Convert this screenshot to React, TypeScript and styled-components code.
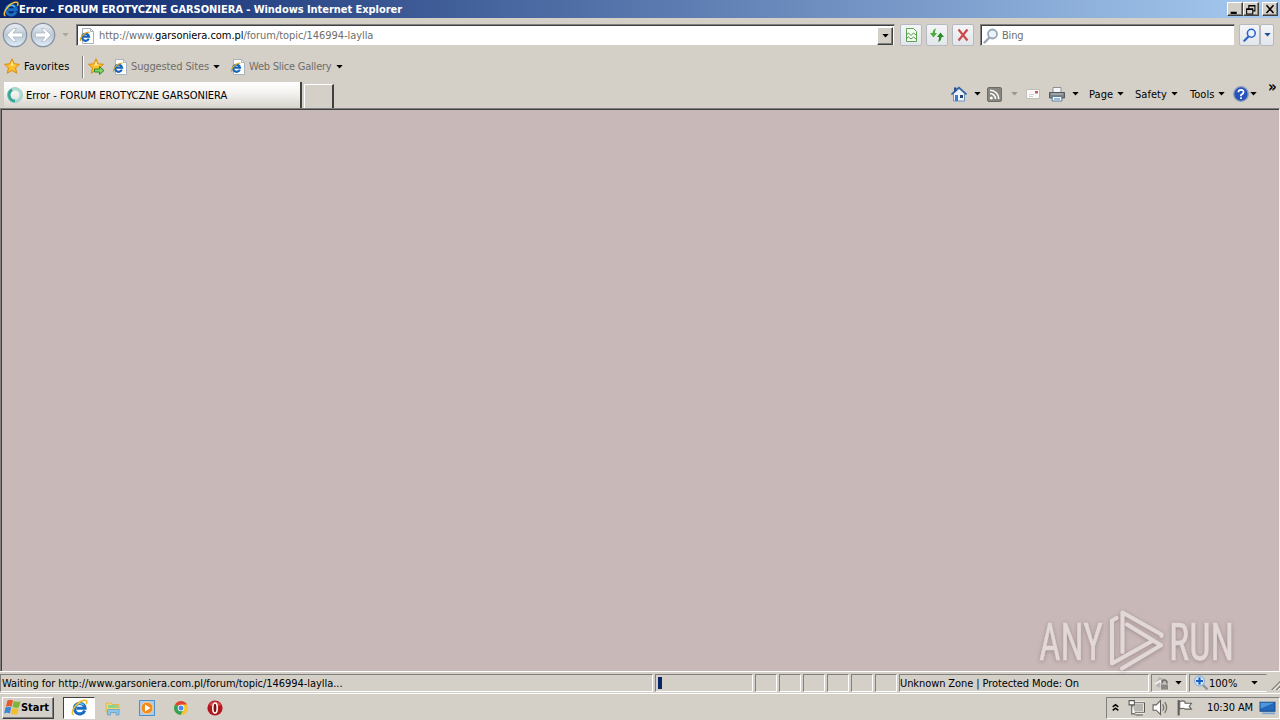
import type {ReactNode} from 'react';
import styled, {createGlobalStyle} from 'styled-components';

const GlobalStyle = createGlobalStyle`
  * {
    box-sizing: border-box;
  }
  body {
    margin: 0;
    overflow: hidden;
    background: #d4d0c8;
  }
  svg {
    flex: none;
  }
`;

const Window = styled.div`
  display: flex;
  flex-direction: column;
  width: 1280px;
  height: 720px;
  background: #d4d0c8;
  color: #000;
  font-family: 'DejaVu Sans Condensed', 'DejaVu Sans', sans-serif;
  font-stretch: condensed;
  font-size: 11px;
  line-height: 14px;
  white-space: nowrap;
`;

const Label = styled.span<{$width: number; $track?: number; $muted?: boolean; $bold?: boolean}>`
  flex: none;
  width: ${(props) => props.$width}px;
  padding-top: 1px;
  letter-spacing: ${(props) => props.$track || 0}px;
  color: ${(props) => (props.$muted ? '#706e69' : 'inherit')};
  font-weight: ${(props) => (props.$bold ? 700 : 400)};
  & > b {
    font-weight: 400;
    color: #000;
  }
`;

const Space = styled.span<{$size: number}>`
  flex: none;
  width: ${(props) => props.$size}px;
`;

const Spacer = styled.div`
  flex: 1;
`;

const TitleBar = styled.header`
  display: flex;
  align-items: center;
  height: 18px;
  padding: 0 2px 0 3px;
  color: #fff;
  background: linear-gradient(90deg, #0a246a, #a6caf0);
`;

const CaptionButton = styled.button`
  width: 16px;
  height: 14px;
  padding: 0;
  display: flex;
  border: 1px solid;
  border-color: #fff #404040 #404040 #fff;
  background: #d4d0c8;
  box-shadow: inset -1px -1px #808080;
`;

const NavRow = styled.div`
  display: flex;
  align-items: center;
  height: 34px;
  padding-left: 2px;
`;

const Field = styled.div<{$width: number}>`
  display: flex;
  align-items: center;
  width: ${(props) => props.$width}px;
  height: 22px;
  padding: 1px 0 0 2px;
  background: #fff;
  border: 1px solid;
  border-color: #808080 #d4d0c8 #d4d0c8 #808080;
  box-shadow: inset 1px 1px #404040;
`;

const FieldDrop = styled.button`
  width: 16px;
  height: 18px;
  margin-right: 1px;
  padding: 0;
  display: flex;
  align-items: center;
  justify-content: center;
  background: #d4d0c8;
  border: 1px solid;
  border-color: #fff #404040 #404040 #fff;
  box-shadow: inset -1px -1px #808080;
`;

const ToolButton = styled.button<{$width?: number}>`
  display: flex;
  align-items: center;
  justify-content: center;
  flex: none;
  width: ${(props) => props.$width || 22}px;
  height: 22px;
  padding: 0;
  border: 1px solid #b5bac2;
  border-radius: 2px;
  background: linear-gradient(#f4f5f6, #e2e6eb);
`;

const FavoritesRow = styled.div`
  display: flex;
  align-items: center;
  height: 29px;
  padding-left: 4px;
`;

const Divider = styled.div`
  width: 2px;
  height: 22px;
  border-left: 1px solid #808080;
  border-right: 1px solid #fff;
`;

const TabRow = styled.div`
  display: flex;
  align-items: flex-end;
  height: 27px;
  padding-left: 4px;
`;

const Tab = styled.div`
  display: flex;
  align-items: center;
  width: 298px;
  height: 26px;
  padding-left: 3px;
  background: linear-gradient(#fff, #f4f3f1 40%, #d8d4cd);
  border-right: 2px solid #404040;
`;

const NewTab = styled.div`
  width: 30px;
  height: 24px;
  margin-left: 2px;
  border-top: 1px solid #fff;
  border-left: 1px solid #fff;
  border-right: 2px solid #404040;
`;

const CommandBar = styled.div`
  display: flex;
  align-items: center;
  align-self: flex-start;
  width: 329px;
  height: 26px;
`;

const Overflow = styled.span`
  align-self: flex-start;
  margin: -1px 0 0 11px;
  font-size: 15px;
  font-weight: 700;
`;

const Page = styled.main`
  position: relative;
  height: 563px;
  border-top: 1px solid #808080;
  border-left: 1px solid #808080;
  border-right: 1px solid #f4efee;
  box-shadow: inset 1px 1px #404040;
  background: #c8b8b7;
`;

const Watermark = styled.svg`
  position: absolute;
  left: 1019px;
  top: 491px;
  overflow: visible;
  filter: drop-shadow(0 1px 2px rgba(90, 70, 70, 0.4));
`;

const StatusBar = styled.footer`
  display: flex;
  gap: 2px;
  height: 22px;
  border-top: 1px solid #fff;
  padding-top: 2px;
`;

const StatusCell = styled.div<{$width: number; $open?: boolean}>`
  display: flex;
  align-items: center;
  flex: none;
  width: ${(props) => props.$width}px;
  height: 18px;
  border: 1px solid;
  border-color: #808080 #fff #fff #808080;
  ${(props) => props.$open && 'border-right-color: transparent;'}
`;

const Progress = styled.div`
  width: 4px;
  height: 12px;
  margin-left: 2px;
  background: #0a246a;
`;

const TaskBar = styled.div`
  display: flex;
  align-items: center;
  height: 27px;
  padding: 1px 0 0 2px;
  border-top: 1px solid #fff;
`;

const StartButton = styled.button`
  display: flex;
  align-items: center;
  width: 52px;
  height: 22px;
  padding: 0 0 0 1px;
  font: inherit;
  text-align: left;
  background: #d4d0c8;
  border: 1px solid;
  border-color: #fff #404040 #404040 #fff;
  box-shadow: inset -1px -1px #808080;
`;

const TaskItem = styled.div<{$active?: boolean}>`
  display: flex;
  align-items: center;
  justify-content: center;
  width: ${(props) => (props.$active ? 32 : 34)}px;
  height: 22px;
  border: 1px solid;
  border-color: ${(props) => (props.$active ? '#404040 #fff #fff #404040' : 'transparent')};
  background: ${(props) => (props.$active ? '#fff' : 'transparent')};
`;

const Tray = styled.div`
  display: flex;
  align-items: center;
  width: 174px;
  height: 22px;
  padding-left: 4px;
  border: 1px solid;
  border-color: #808080 #fff #fff #808080;
`;

const Arrow = ({color = '#000'}: {color?: string}) => (
  <svg width="7" height="4" viewBox="0 0 7 4">
    <path d="M.300 0h6.400L3.500 3.600z" fill={color} />
  </svg>
);

const Glyph = ({children, size = 16}: {children: ReactNode; size?: number}) => (
  <svg width={size} height={size} viewBox="0 0 16 16" fill="none">
    {children}
  </svg>
);

const IeLogo = ({size = 16}: {size?: number}) => (
  <Glyph size={size}>
    <path d="M12.900 10.800A5 5 0 1 1 13.200 8.700H5" stroke="#1a6dc4" strokeWidth="3" />
    <path d="M4 7.500A4.600 4.600 0 0 1 12 6" stroke="#62c3f2" strokeWidth="1.200" />
    <path d="M2.500 14.800C-1.500 14 4.500 3 12 1.300c3.500-.8 3.300 1.500 2.300 3.500" stroke="#f2be2e" strokeWidth="1.500" />
  </Glyph>
);

const PageIcon = () => (
  <Glyph>
    <path d="M3.500.500h8l3 3v12h-11z" fill="#fff" stroke="#a9b3bf" />
    <path d="M11.500.500v3h3" stroke="#a9b3bf" />
    <path d="M9.800 10.600a3.500 3.500 0 1 1 .2-2H4" stroke="#1765b8" strokeWidth="2.200" />
    <path d="M1.800 13C0 10.500 5 4.300 10.500 4" stroke="#e0ab25" strokeWidth="1.200" />
  </Glyph>
);

const RoundArrow = ({flip}: {flip?: boolean}) => (
  <svg width="26" height="26" viewBox="0 0 26 26">
    <defs>
      <linearGradient id="round" x2="0" y2="1">
        <stop offset="0" stopColor="#eef1f5" />
        <stop offset=".5" stopColor="#bcc7d5" />
        <stop offset="1" stopColor="#e2eefa" />
      </linearGradient>
    </defs>
    <circle cx="13" cy="13" r="11.700" fill="url(#round)" stroke="#8592a4" strokeWidth="1.300" />
    <path
      transform={flip ? 'matrix(-1 0 0 1 26 0)' : undefined}
      d="M5 13l6.500-6.500h3L11 11h9.500v4H11l3.500 4.500h-3z"
      fill="#fff"
      stroke="#a3b1c2"
      strokeWidth=".7"
    />
  </svg>
);

const Star = ({add}: {add?: boolean}) => (
  <svg width="17" height="17" viewBox="0 0 17 17">
    <path d="M8 .8l2.200 5 5.300.5-4 3.600 1.200 5.300L8 12.400l-4.700 2.800 1.200-5.300-4-3.600 5.300-.5z" fill="#fcc02c" stroke="#d98b14" />
    <path d="M8 3l1.300 3.600 3 .4-6 1z" fill="#ffe989" />
    {add && <path d="M6.500 11h5V8.500l4.500 4-4.500 4V14h-5z" fill="#7fd465" stroke="#2e8a2a" />}
  </svg>
);

const Lens = ({color, size = 16}: {color: string; size?: number}) => (
  <Glyph size={size}>
    <path d="M6 10l-4.500 4.500" stroke={color} strokeWidth="2.400" strokeLinecap="round" />
    <circle cx="9.500" cy="6" r="4.500" fill="#eaf3fc" stroke={color} strokeWidth="1.800" />
  </Glyph>
);

const ZoomIn = () => (
  <Glyph>
    <path d="M10 10l4.500 4.500" stroke="#8a94a0" strokeWidth="2.400" />
    <circle cx="6.500" cy="6" r="5" fill="#cfe6fb" stroke="#7ea9d6" />
    <path d="M3 6h7M6.500 2.500v7" stroke="#1c5fc0" strokeWidth="2.200" />
  </Glyph>
);

const Spinner = () => (
  <Glyph>
    <circle cx="8" cy="8" r="6" stroke="#a9dcd2" strokeWidth="3" />
    <path d="M8 14A6 6 0 0 1 5 2.800" stroke="#35a695" strokeWidth="3" />
    <circle cx="8" cy="8" r="7.500" stroke="#8abdb6" strokeWidth=".6" />
  </Glyph>
);

const WindowsFlag = () => (
  <svg width="17" height="17" viewBox="0 0 17 17">
    <path d="M3.500 1.500q3-1.500 5.500 0L7.600 7.700q-3-1.500-5.800 0z" fill="#e8592b" />
    <path d="M9.800 2q3 1.500 6.700.2L15 8.300q-3 1.300-6.500-.2z" fill="#7cb63a" />
    <path d="M1.500 8.600q3-1.500 5.800 0L5.900 14.500q-3-1.500-5.800 0z" fill="#3f86d5" />
    <path d="M8.200 9q3 1.500 6.500.2L13.300 15q-3 1.300-6.500-.2z" fill="#f3bd2c" />
  </svg>
);

const menus = [
  {name: 'Page', width: 28, after: 11},
  {name: 'Safety', width: 36, after: 12},
  {name: 'Tools', width: 28, after: 8},
];

const CommandMenu = ({name, width, after}: {name: string; width: number; after: number}) => (
  <>
    <Label $width={width} $track={0.05}>
      {name}
    </Label>
    <Arrow />
    <Space $size={after} />
  </>
);

export default function App() {
  return (
    <Window>
      <GlobalStyle />
      <TitleBar>
        <IeLogo />
        <Label $width={390} $track={-0.05} $bold>
          Error - FORUM EROTYCZNE GARSONIERA - Windows Internet Explorer
        </Label>
        <Spacer />
        <CaptionButton>
          <Glyph size={14}>
            <path d="M3 10h7v2.500H3z" fill="#000" />
          </Glyph>
        </CaptionButton>
        <CaptionButton>
          <Glyph size={14}>
            <path d="M5.500 6V3h7v6H10M5.500 3.500h7M3 6.500h7v6H3zM3 7.500h7" stroke="#000" strokeWidth="1.200" />
          </Glyph>
        </CaptionButton>
        <Space $size={3} />
        <CaptionButton>
          <Glyph size={14}>
            <path d="M4 2.500l8 9M12 2.500l-8 9" stroke="#000" strokeWidth="1.800" />
          </Glyph>
        </CaptionButton>
      </TitleBar>

      <NavRow>
        <RoundArrow />
        <Space $size={2} />
        <RoundArrow flip />
        <Space $size={6} />
        <Arrow color="#aaa69f" />
        <Space $size={7} />
        <Field $width={819}>
          <PageIcon />
          <Space $size={4} />
          <Label $width={300} $track={-0.06} $muted>
            http://www.<b>garsoniera.com.pl</b>/forum/topic/146994-laylla
          </Label>
          <Spacer />
          <FieldDrop>
            <Arrow />
          </FieldDrop>
        </Field>
        <Space $size={5} />
        <ToolButton>
          <Glyph>
            <path d="M3.500 1.500h7l3 3v10h-10z" fill="#f4fbf1" stroke="#5da054" />
            <path d="M3 8l2.500-2L8 8.500 10.500 6 13 8M3 12l2.500-2L8 12l2.500-2 2.500 2" stroke="#4a9a42" />
          </Glyph>
        </ToolButton>
        <Space $size={4} />
        <ToolButton>
          <Glyph>
            <path d="M7 1.500Q4 2 3.500 6H1l3.500 4.500L8 6H6Q6 3.500 7 1.500z" fill="#4bac3c" />
            <path d="M9 15q3.500-1 3.500-5H15l-3.500-4.500L8 10h2q0 3-1 5z" fill="#2e8b2a" />
          </Glyph>
        </ToolButton>
        <Space $size={4} />
        <ToolButton>
          <Glyph>
            <path d="M3.500 2.500l9 11M12.500 2.500l-9 11" stroke="#cc4a4a" strokeWidth="2.200" />
          </Glyph>
        </ToolButton>
        <Space $size={6} />
        <Field $width={255}>
          <Lens color="#9aa5b1" />
          <Space $size={3} />
          <Label $width={40} $track={-0.2} $muted>
            Bing
          </Label>
        </Field>
        <Space $size={4} />
        <ToolButton $width={21}>
          <Lens color="#2a62c8" size={14} />
        </ToolButton>
        <ToolButton $width={14}>
          <Arrow color="#1d4fa0" />
        </ToolButton>
      </NavRow>

      <FavoritesRow>
        <Star />
        <Space $size={3} />
        <Label $width={58} $track={0.1}>
          Favorites
        </Label>
        <Divider />
        <Space $size={4} />
        <Star add />
        <Space $size={7} />
        <PageIcon />
        <Space $size={3} />
        <Label $width={82} $track={-0.13} $muted>
          Suggested Sites
        </Label>
        <Arrow />
        <Space $size={10} />
        <PageIcon />
        <Space $size={3} />
        <Label $width={87} $track={-0.23} $muted>
          Web Slice Gallery
        </Label>
        <Arrow />
      </FavoritesRow>

      <TabRow>
        <Tab>
          <Spinner />
          <Space $size={3} />
          <Label $width={230}>Error - FORUM EROTYCZNE GARSONIERA</Label>
        </Tab>
        <NewTab />
        <Spacer />
        <CommandBar>
          <Glyph>
            <path d="M2.500 7.500V15h11V7.500L8 2.500z" fill="#eef3fa" stroke="#6f93c0" />
            <path d="M3 1.500h2.500V5L3 7z" fill="#2a4a86" />
            <path d="M.500 8.500L8 1.500l7.500 7" stroke="#2c5f9e" strokeWidth="1.600" />
            <path d="M4 9h3v6H4z" fill="#3a7fc4" />
            <path d="M9 9h3v3H9z" fill="#24436f" />
          </Glyph>
          <Space $size={7} />
          <Arrow />
          <Space $size={6} />
          <Glyph>
            <rect x=".500" y="1.500" width="14" height="14" rx="1.500" fill="#87877f" stroke="#6d6d67" />
            <circle cx="4.300" cy="12" r="1.500" fill="#fff" />
            <path d="M3 7.500A5.500 5.500 0 0 1 8.500 13M3 4.200A8.800 8.800 0 0 1 11.800 13" stroke="#fff" strokeWidth="1.600" />
          </Glyph>
          <Space $size={8} />
          <Arrow color="#9a958e" />
          <Space $size={7} />
          <Glyph>
            <path d="M1.500 3.500h13v9h-13z" fill="#fbfaf8" stroke="#c3beb8" />
            <path d="M10 5h3v2.500h-3z" fill="#c95a62" />
            <path d="M4 8.500h5M4 10.500h4" stroke="#ccd0dc" />
          </Glyph>
          <Space $size={8} />
          <Glyph>
            <path d="M4 1.500h8V7H4z" fill="#f5f7f9" stroke="#8a8f96" />
            <path d="M.500 6.500h15v5.500h-15z" fill="#7b8087" stroke="#54595f" />
            <path d="M2 8h12" stroke="#c3c7cb" />
            <path d="M3.500 10.500h9l.5 4.500H3z" fill="#f2f8fd" stroke="#6b7f95" />
            <path d="M5 13h6" stroke="#3285ca" />
          </Glyph>
          <Space $size={7} />
          <Arrow />
          <Space $size={10} />
          {menus.map((menu) => (
            <CommandMenu key={menu.name} {...menu} />
          ))}
          <Glyph>
            <circle cx="8" cy="8" r="7.300" fill="#2753bd" stroke="#8c9dbd" strokeWidth="1.300" />
            <path d="M5.300 6.200Q5.500 3.800 8 3.800t2.600 2.200Q10.600 7.500 8 9v1.300M8 11.300v1.800" stroke="#fff" strokeWidth="1.700" />
          </Glyph>
          <Space $size={1} />
          <Arrow />
          <Overflow>»</Overflow>
        </CommandBar>
      </TabRow>

      <Page>
        <Watermark width="230" height="80" viewBox="0 0 230 80" fill="none">
          <g fill="#e2d8d7" stroke="#e2d8d7" strokeWidth=".500" fontFamily="Roboto" fontSize="52">
            <text x="19" y="60" textLength="64" lengthAdjust="spacingAndGlyphs">
              ANY
            </text>
            <text x="149" y="60" textLength="65" lengthAdjust="spacingAndGlyphs">
              RUN
            </text>
          </g>
          <path
            d="M96.500 18l-4.500 2.500V63.500L133 40.500M102.500 52V12.500L141.500 34.500v1.500M107 24.500L141 45.300 102 68.500"
            stroke="#e2d8d7"
            strokeWidth="4.200"
            strokeLinejoin="round"
            strokeLinecap="round"
          />
        </Watermark>
      </Page>

      <StatusBar>
        <StatusCell $width={653}>
          <Space $size={1} />
          <Label $width={400} $track={-0.05}>
            Waiting for http://www.garsoniera.com.pl/forum/topic/146994-laylla...
          </Label>
        </StatusCell>
        <StatusCell $width={98}>
          <Progress />
        </StatusCell>
        {[1, 2, 3, 4, 5, 6].map((cell) => (
          <StatusCell key={cell} $width={22} />
        ))}
        <StatusCell $width={250}>
          <Label $width={200} $track={-0.09}>
            Unknown Zone | Protected Mode: On
          </Label>
        </StatusCell>
        <StatusCell $width={36}>
          <Space $size={2} />
          <Glyph>
            <path d="M1 8l4-6 6 2 2 5-5 4-5-1z" fill="#b9b7b4" />
            <path d="M1 9l5-3 3 4" stroke="#f6f5f3" strokeWidth="2" />
            <path d="M8 9V7.500a2.500 2.500 0 0 1 5 0V9" stroke="#6d6a67" strokeWidth="1.500" />
            <path d="M6.500 9h8v6h-8z" fill="#8b8885" stroke="#f0efed" strokeWidth=".6" />
          </Glyph>
          <Space $size={5} />
          <Arrow />
        </StatusCell>
        <StatusCell $width={78} $open>
          <Space $size={3} />
          <ZoomIn />
          <Label $width={42}>100%</Label>
          <Arrow />
        </StatusCell>
        <Glyph>
          <path d="M1 18L13 6M5.500 18L13 10.500M10 18l3-3" stroke="#8a8680" strokeWidth="1.600" />
          <path d="M2.500 18L13 7.500M7 18l6-6" stroke="#fff" />
        </Glyph>
      </StatusBar>

      <TaskBar>
        <StartButton>
          <WindowsFlag />
          <Label $width={32} $track={-0.05} $bold>
            Start
          </Label>
        </StartButton>
        <Space $size={9} />
        <TaskItem $active>
          <IeLogo size={17} />
        </TaskItem>
        <Space $size={1} />
        <TaskItem>
          <Glyph>
            <path d="M1 3h5l1 1.500h7V12H1z" fill="#f3d777" stroke="#d9b04a" strokeWidth=".8" />
            <path d="M3 5h10v3H3z" fill="#8fd48c" />
            <path d="M2.500 15V9.500h11.500V15h-3v-2.500H5.500V15z" fill="#8cc5ea" stroke="#5b9bc9" strokeWidth=".7" />
          </Glyph>
        </TaskItem>
        <TaskItem>
          <Glyph>
            <path d="M.500.500h15v15H.500z" fill="#a8cdee" stroke="#4b8ecb" />
            <circle cx="8" cy="8" r="6" fill="#f28a1c" stroke="#fbd39a" />
            <path d="M6 4.500L11.500 8 6 11.500z" fill="#fff" />
          </Glyph>
        </TaskItem>
        <TaskItem>
          <Glyph>
            <circle cx="8" cy="8" r="7" fill="#f4c430" />
            <path d="M8 8L2 4.400A7 7 0 0 1 14 4.500H8z" fill="#df4436" />
            <path d="M2 4.400A7 7 0 0 0 7.500 15l3-5.500L8 8z" fill="#33a457" />
            <circle cx="8" cy="8" r="3.300" fill="#fff" />
            <circle cx="8" cy="8" r="2.500" fill="#4a8af0" />
          </Glyph>
        </TaskItem>
        <TaskItem>
          <Glyph>
            <circle cx="8" cy="8" r="7.600" fill="#b3161b" />
            <path d="M2 5a7 7 0 0 1 12 0q-6 3-12 0z" fill="#d8484a" />
            <ellipse cx="8" cy="8" rx="2.200" ry="5" fill="#7c0d10" stroke="#fff" strokeWidth="1.600" />
          </Glyph>
        </TaskItem>
        <Spacer />
        <Tray>
          <Glyph size={9}>
            <path d="M3 7l5-4 5 4M3 13l5-4 5 4" stroke="#000" strokeWidth="2.600" />
          </Glyph>
          <Space $size={8} />
          <Glyph size={17}>
            <path d="M4.500 3.500h11v9h-11z" fill="#b8b6b1" stroke="#fff" strokeWidth="2.400" />
            <path d="M4.500 3.500h11v9h-11zM7 15h7" stroke="#5b5955" />
            <path d="M1 1.500h5v4H1zM3.500 5.500V14H7" fill="#fff" stroke="#5b5955" />
          </Glyph>
          <Space $size={7} />
          <Glyph size={17}>
            <path d="M1 5.500h3L8 1.500v13l-4-4H1z" fill="#fff" stroke="#63605c" />
            <path d="M10 5q2 3 0 6M12 3q3.500 5 0 10" stroke="#75726e" strokeWidth="1.200" />
          </Glyph>
          <Space $size={7} />
          <Glyph size={17}>
            <path d="M2.500 1v14.500" stroke="#63605c" strokeWidth="2" />
            <path d="M3.500 2.500q3-1.500 5 0V4h6l-2 3 2 2.500H8.500q-2-1.500-5 0z" fill="#fff" stroke="#63605c" />
          </Glyph>
          <Space $size={14} />
          <Label $width={52} $track={-0.12}>
            10:30 AM
          </Label>
          <Glyph size={17}>
            <path d="M1 3h14v8.500H1z" fill="#2268bd" stroke="#174a8c" />
            <path d="M1.500 3.500h13L1.500 9z" fill="#4f98dc" />
            <path d="M3 13.500h12" stroke="#6fa4d3" strokeWidth="1.500" />
          </Glyph>
        </Tray>
      </TaskBar>
    </Window>
  );
}
